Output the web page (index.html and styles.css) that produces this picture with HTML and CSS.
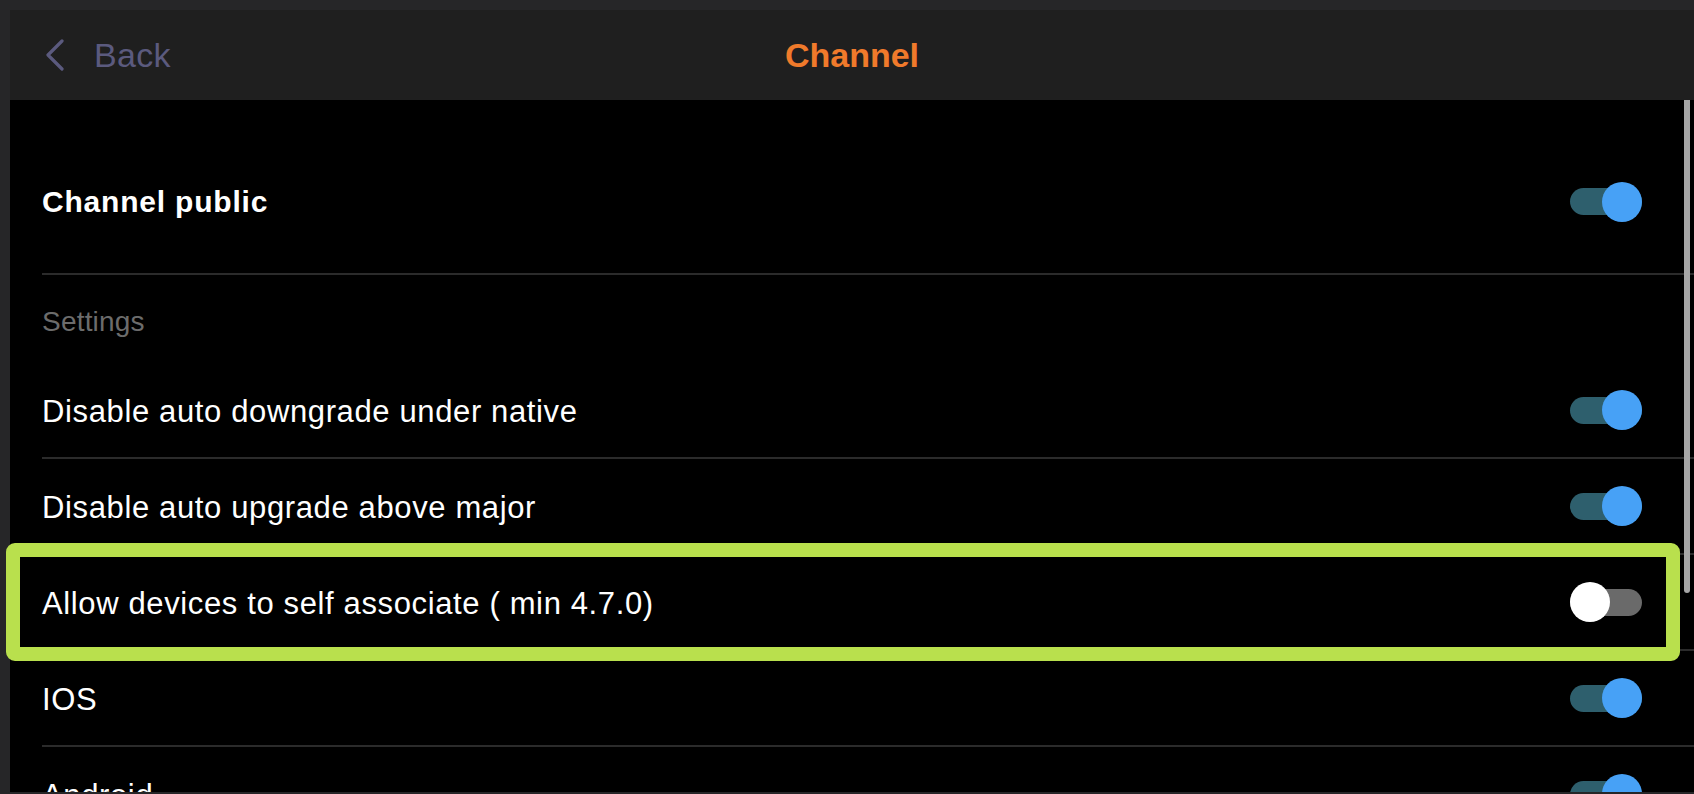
FILE: index.html
```html
<!DOCTYPE html>
<html lang="en">
<head>
<meta charset="utf-8">
<title>Channel</title>
<link rel="stylesheet" href="styles.css">
</head>
<body>
<div class="frame">
  <header class="header">
    <div class="back">
      <svg class="chevron" width="20" height="32" viewBox="0 0 20 32" aria-hidden="true">
        <polyline points="17,2 3,16 17,30" fill="none" stroke="#5b5a7e" stroke-width="3.2" stroke-linecap="round" stroke-linejoin="round"/>
      </svg>
      <span class="back-label">Back</span>
    </div>
    <h1 class="title">Channel</h1>
    <div class="spacer"></div>
  </header>
  <main class="content">
    <div class="list">
      <div class="row row-main">
        <span class="label label-bold">Channel public</span>
        <span class="toggle on"><span class="track"></span><span class="knob"></span></span>
      </div>
      <div class="section-title">Settings</div>
      <div class="row">
        <span class="label">Disable auto downgrade under native</span>
        <span class="toggle on"><span class="track"></span><span class="knob"></span></span>
      </div>
      <div class="row">
        <span class="label">Disable auto upgrade above major</span>
        <span class="toggle on"><span class="track"></span><span class="knob"></span></span>
      </div>
      <div class="row">
        <span class="label">Allow devices to self associate ( min 4.7.0)</span>
        <span class="toggle off"><span class="track"></span><span class="knob"></span></span>
      </div>
      <div class="row">
        <span class="label">IOS</span>
        <span class="toggle on"><span class="track"></span><span class="knob"></span></span>
      </div>
      <div class="row">
        <span class="label">Android</span>
        <span class="toggle on"><span class="track"></span><span class="knob"></span></span>
      </div>
    </div>
    <div class="scrollbar"></div>
  </main>
  <div class="highlight"></div>
</div>
</body>
</html>
```
FILE: styles.css
```css
html, body {
  margin: 0;
  padding: 0;
  background: #262628;
}
body {
  font-family: "Liberation Sans", Arial, Helvetica, sans-serif;
}
.frame {
  position: relative;
  width: 1694px;
  height: 794px;
  box-sizing: border-box;
  padding: 10px 0 2px 10px;
  background: #262628;
  display: flex;
  flex-direction: column;
  overflow: hidden;
}
.header {
  height: 90px;
  flex: none;
  background: #1f1f1f;
  display: grid;
  grid-template-columns: 1fr auto 1fr;
  align-items: center;
}
.back {
  display: flex;
  align-items: center;
  padding-left: 35px;
}
.chevron {
  display: block;
}
.back-label {
  margin-left: 29px;
  font-size: 34px;
  letter-spacing: 0.3px;
  color: #5b5a7e;
}
.title {
  margin: 0;
  font-size: 34px;
  font-weight: bold;
  color: #f07a2b;
}
.content {
  position: relative;
  flex: 1;
  background: #000;
  overflow: hidden;
}
.list {
  padding: 30px 0 0 32px;
}
.row {
  height: 94px;
  display: flex;
  align-items: center;
  justify-content: space-between;
  padding-right: 52px;
  border-bottom: 2px solid #2b2b2b;
}
.row-main {
  height: 143px;
}
.label {
  padding-top: 3px;
  font-size: 31px;
  letter-spacing: 0.63px;
  color: #fff;
}
.label-bold {
  padding-top: 1px;
  font-size: 30px;
  font-weight: bold;
  letter-spacing: 0.8px;
}
.section-title {
  height: 82px;
  padding-top: 6px;
  display: flex;
  align-items: center;
  font-size: 28px;
  letter-spacing: 0.2px;
  color: #6c6c6c;
}
.toggle {
  position: relative;
  width: 72px;
  height: 40px;
  flex: none;
}
.track {
  position: absolute;
  left: 0;
  top: 6.5px;
  width: 72px;
  height: 27px;
  border-radius: 14px;
}
.knob {
  position: absolute;
  top: 0;
  width: 40px;
  height: 40px;
  border-radius: 50%;
}
.toggle.on .track {
  background: #2e5f6d;
}
.toggle.on .knob {
  right: 0;
  background: #47a1f6;
}
.toggle.off .track {
  background: #6a6a6a;
}
.toggle.off .knob {
  left: 0;
  background: #fff;
}
.scrollbar {
  position: absolute;
  top: 0;
  right: 4px;
  width: 6px;
  height: 493px;
  background: #a6a6a6;
  border-radius: 0 0 3px 3px;
}
.highlight {
  position: absolute;
  left: 6px;
  top: 543px;
  width: 1674px;
  height: 118px;
  box-sizing: border-box;
  border: 14px solid #b9e04d;
  border-radius: 9px;
}
```
